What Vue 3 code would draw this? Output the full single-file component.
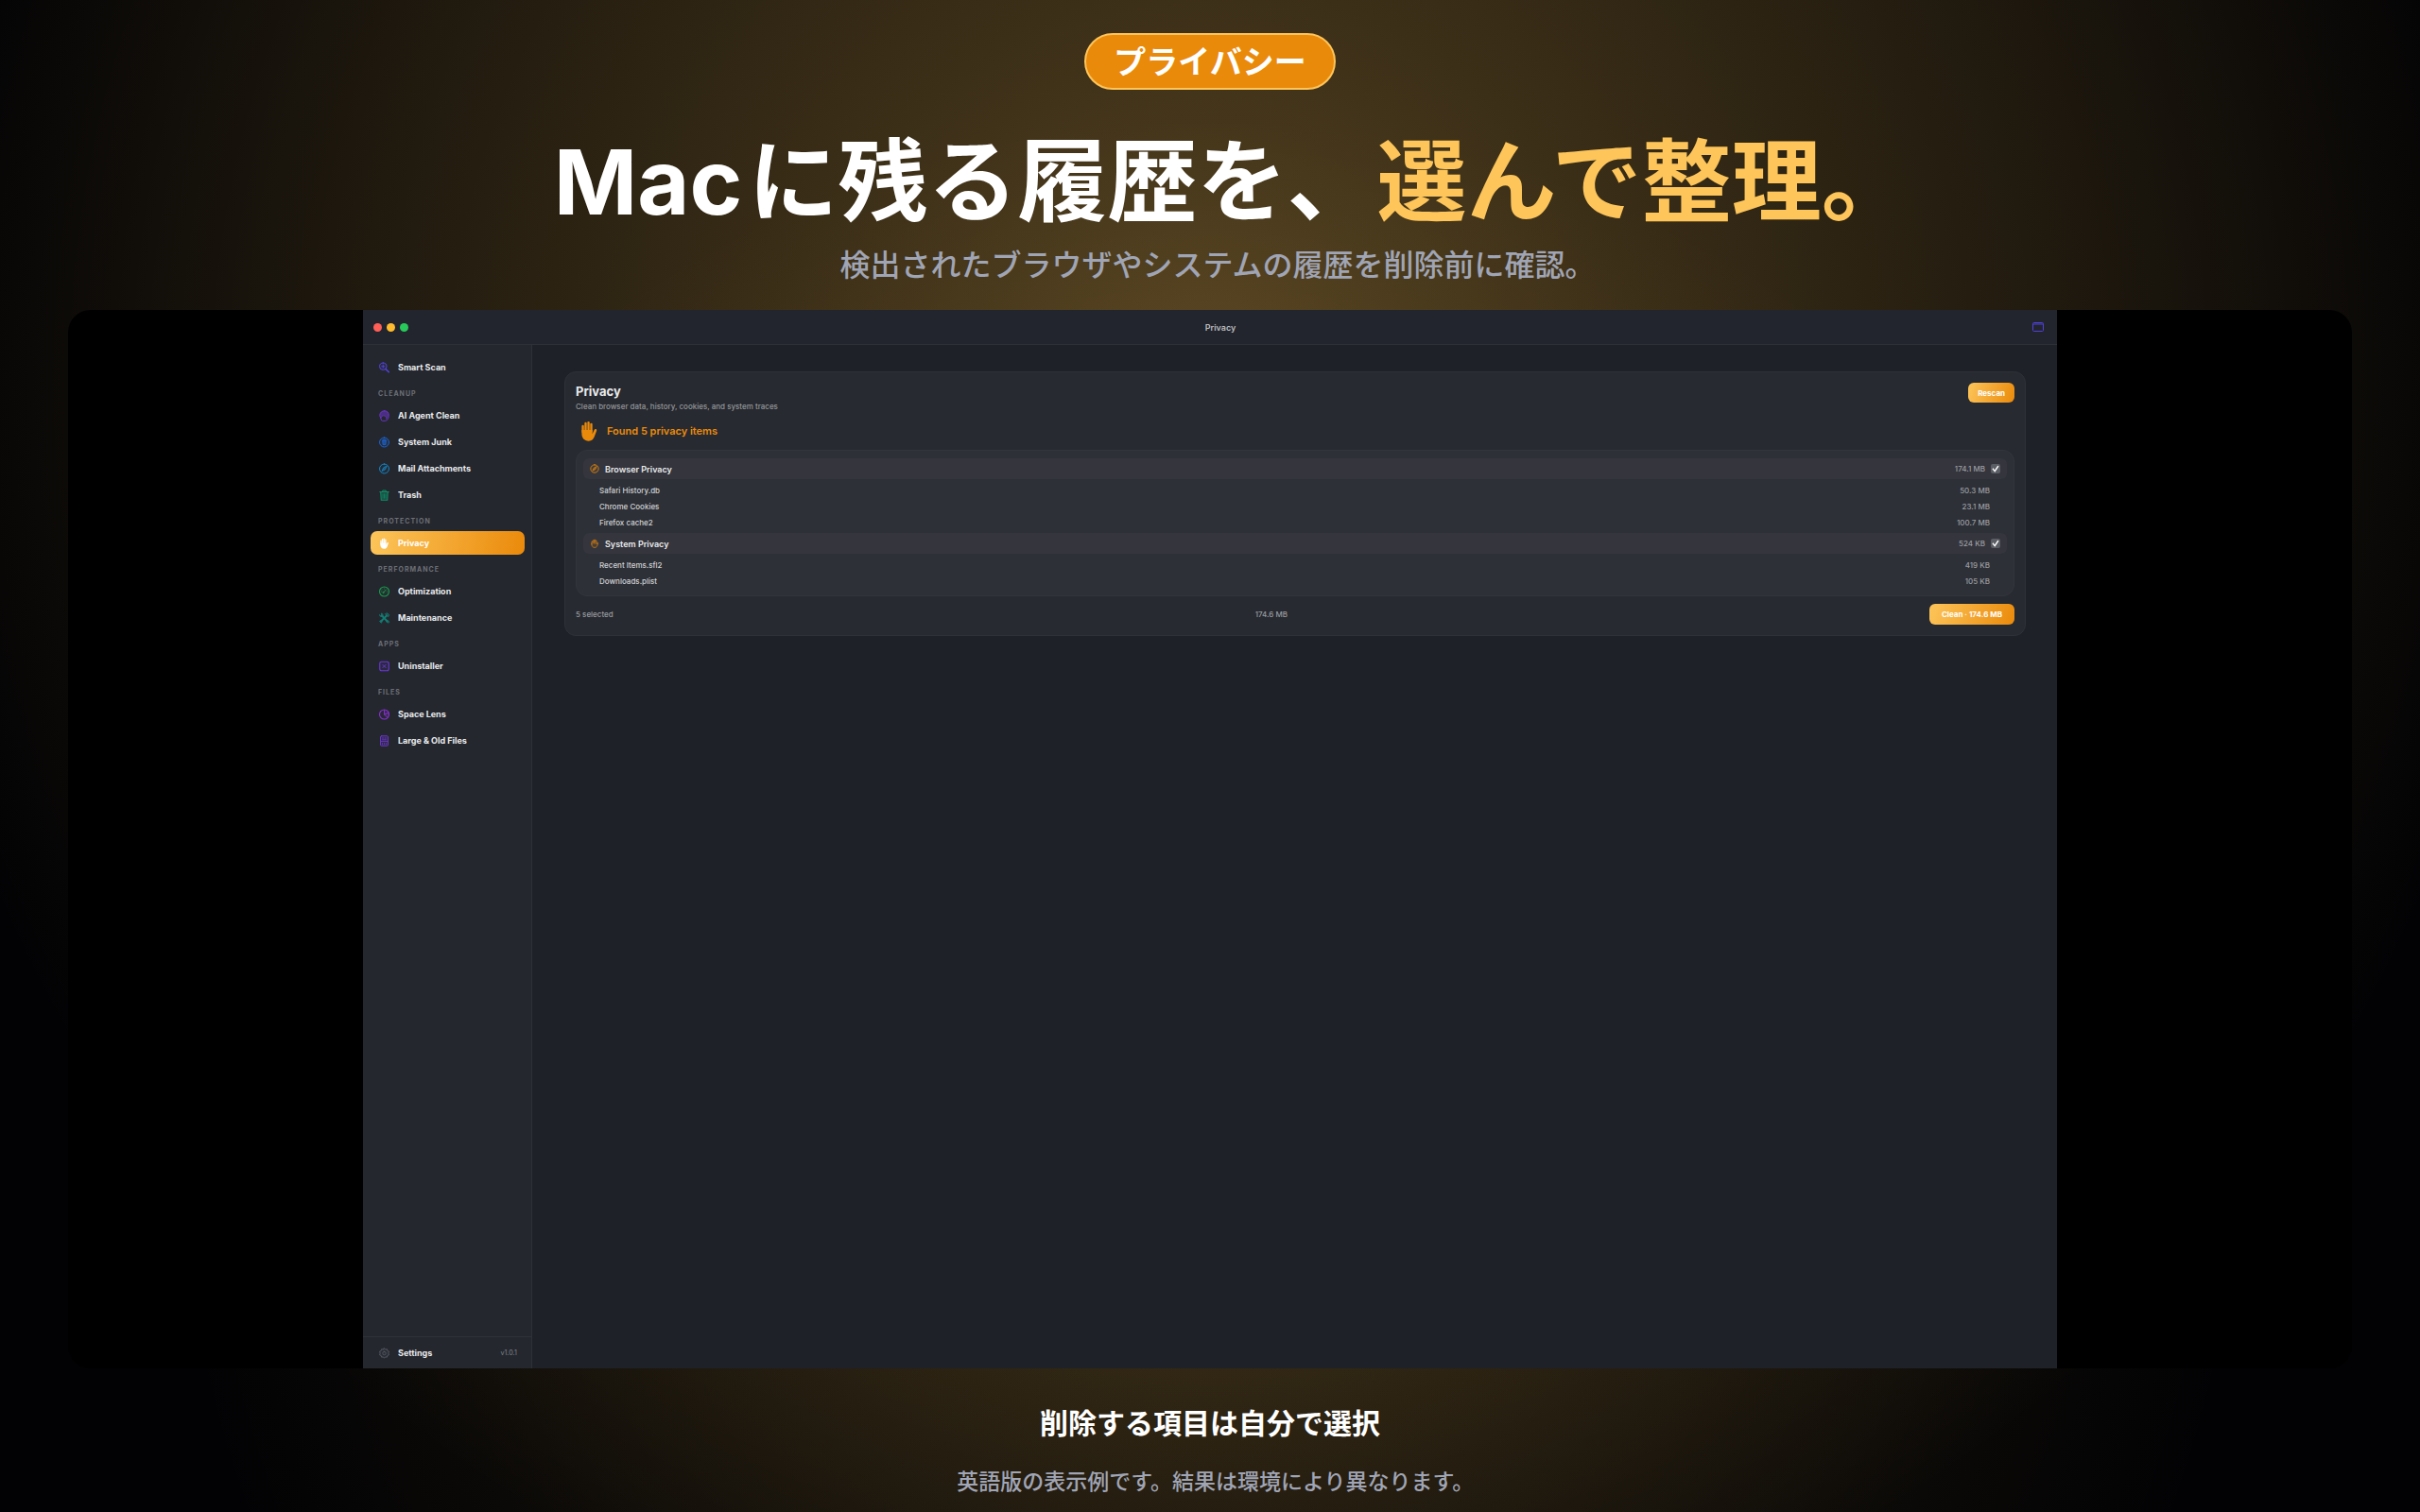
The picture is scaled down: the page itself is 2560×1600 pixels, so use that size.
<script setup>
import { reactive } from 'vue'

const hand = [
  { d: 'M5 13V6.500M8.200 12V3.300M11.500 12V2.300M14.700 12.500V4.200', w: 2.600 },
  { d: 'M3.700 11h12.300v4.500l2.100-4.600c.5-1 1.200-1.400 2-1.100.8.3 1 1.100.7 2.100l-2.600 7c-1.100 3-3.200 4.700-6.400 4.700-5.200 0-8.100-3.500-8.100-8.600z', w: 0, fill: 1 }
]

const icons = {
  scan: [
    { d: 'M9.500 2a7.500 7.500 0 1 0 0 15 7.500 7.500 0 0 0 0-15z', w: 2, fill: 0.15 },
    { d: 'M15 15l6.500 6.500', w: 3.200 },
    { d: 'M9.500 6.500v6M6.500 9.500h6', w: 1.800 }
  ],
  agent: [
    { d: 'M12.500 1.500C6.500 1.500 2.500 5.500 2.500 11c0 2 .8 3.500 2 5l.8 4c.4 1.800 1.500 2.700 3.200 2.700h5c4.500 0 8-5 8-12C21.500 5 18 1.500 12.500 1.500z', w: 2 },
    { d: 'M12.500 1.500C6.500 1.500 2.500 5.500 2.500 11l2 5c1 0 3-1 4-4.500 3 1 5.500 0 7 2.500 1 1.700 0 4 2 4 3-2 4-5 4-8C21.500 5 18 1.500 12.500 1.500z', w: 0, fill: 0.55 },
    { d: 'M5 16c1.800-1 3-2.500 3.500-4.500 3 1 5.500 0 7 2.500 1 1.700.2 4 1.500 6', w: 1.500 }
  ],
  junk: [
    { d: 'M12 2a10 10 0 1 0 0 20 10 10 0 0 0 0-20z', w: 2, fill: 0.15 },
    { d: 'M7.500 8h9M10 6.500h4M8.500 9l.5 8h6l.5-8z', w: 1.700, fill: 0.6 }
  ],
  compass: [
    { d: 'M12 2a10 10 0 1 0 0 20 10 10 0 0 0 0-20z', w: 2, fill: 0.05 },
    { d: 'M17 7l-3.200 6.800L7 17l3.200-6.800z', w: 1.600, fill: 0.5 }
  ],
  trash: [
    { d: 'M2.500 5h19M8.500 4.500V2h7v2.500', w: 2 },
    { d: 'M4.500 6l1 16.500h13L19.500 6', w: 2.200, fill: 0.35 },
    { d: 'M9 9.500v9M12 9.500v9M15 9.500v9', w: 1.500 }
  ],
  hand,
  palm: [
    { d: 'M4.500 14V8.500c0-2 3-2 3 0V5.500c0-2 3.200-2 3.200 0V4c0-2 3.200-2 3.200 0v2c0-2 3-2 3 0v7.500l1.500-2.500c1-1.500 3-.5 2.400 1.200l-2.300 6c-1 2.800-3 4.300-6.500 4.300-5 0-7.500-3-7.500-8.500z', w: 1.600, fill: 0.1 },
    { d: 'M7.500 8.500V12M10.700 5.500V12M13.900 6V12', w: 1.400 }
  ],
  gauge: [
    { d: 'M12 2a10 10 0 1 0 0 20 10 10 0 0 0 0-20z', w: 2.200, fill: 0.08 },
    { d: 'M11 13.500l4.500-5.500M10.500 12.500a1.500 1.500 0 1 0 1 2', w: 1.900 },
    { d: 'M7 8v.1M12 6v.1M6 12v.1M18 12v.1', w: 1.500 }
  ],
  tools: [
    { d: 'M6.500 6.500l12 12.500', w: 4 },
    { d: 'M2 5.500C2 8.500 4 9.500 7 9l2-2C9.500 4 8.500 2 5.500 2l1 3-1.500 1.500z', w: 1.500, fill: 0.4 },
    { d: 'M17.500 6.500L5 19', w: 4 },
    { d: 'M14.500 3l4-1.500 4 4-2 3.500zM2.500 18.500l3-1.500 2 2-1.500 3zM16.500 19l2.500-2.500 3 3c1 2-.5 3.500-2.500 2.500z', w: 1.600, fill: 0.4 }
  ],
  uninstall: [
    { d: 'M6 2.500h12a3.500 3.500 0 0 1 3.500 3.500v12a3.500 3.500 0 0 1-3.500 3.500H6A3.500 3.500 0 0 1 2.500 18V6A3.500 3.500 0 0 1 6 2.500z', w: 2.200, fill: 0.1 },
    { d: 'M9 9l6 6M15 9l-6 6', w: 2 }
  ],
  lens: [
    { d: 'M12 2a10 10 0 1 0 0 20 10 10 0 0 0 0-20z', w: 2.200, fill: 0.05 },
    { d: 'M12 3v9l6.500 6.500M12 12l8.500-3', w: 1.800 },
    { d: 'M12 3v9l6.500 6.500A9 9 0 0 0 12 3z', w: 0, fill: 0.2 }
  ],
  files: [
    { d: 'M6 1.500h12a2 2 0 0 1 2 2v17a2 2 0 0 1-2 2H6a2 2 0 0 1-2-2v-17a2 2 0 0 1 2-2z', w: 2, fill: 0.2 },
    { d: 'M8 6h2M13 6h3M8 9.500h8M5 13h14M8 17v2.500M12 17v2.500M16 17v2.500', w: 1.700 }
  ],
  gear: [
    { d: 'M12 1.500l2.300 2.700 3.500-.8.9 3.400 3.300 1.500-1.400 3.700 1.400 3.400-3.300 1.500-.9 3.500-3.500-.7L12 22.500l-2.300-2.800-3.500.7-.9-3.500L2 15.400 3.400 12 2 8.300l3.300-1.500.9-3.400 3.500.8z', w: 1.700, fill: 0.1 },
    { d: 'M12 8.500a3.500 3.500 0 1 0 0 7 3.500 3.500 0 0 0 0-7z', w: 1.500 }
  ]
}

const sections = [
  { label: '', items: [{ name: 'Smart Scan', icon: 'scan', tone: 'indigo' }] },
  {
    label: 'CLEANUP',
    items: [
      { name: 'AI Agent Clean', icon: 'agent', tone: 'purple' },
      { name: 'System Junk', icon: 'junk', tone: 'blue' },
      { name: 'Mail Attachments', icon: 'compass', tone: 'sky' },
      { name: 'Trash', icon: 'trash', tone: 'emerald' }
    ]
  },
  { label: 'PROTECTION', items: [{ name: 'Privacy', icon: 'hand', tone: 'white', active: true }] },
  {
    label: 'PERFORMANCE',
    items: [
      { name: 'Optimization', icon: 'gauge', tone: 'green' },
      { name: 'Maintenance', icon: 'tools', tone: 'teal' }
    ]
  },
  { label: 'APPS', items: [{ name: 'Uninstaller', icon: 'uninstall', tone: 'violet' }] },
  {
    label: 'FILES',
    items: [
      { name: 'Space Lens', icon: 'lens', tone: 'magenta' },
      { name: 'Large & Old Files', icon: 'files', tone: 'purple' }
    ]
  }
]

const groups = reactive([
  {
    id: 'browser', name: 'Browser Privacy', icon: 'compass', size: '174.1 MB', checked: true,
    rows: [
      { name: 'Safari History.db', size: '50.3 MB' },
      { name: 'Chrome Cookies', size: '23.1 MB' },
      { name: 'Firefox cache2', size: '100.7 MB' }
    ]
  },
  {
    id: 'system', name: 'System Privacy', icon: 'palm', size: '524 KB', checked: true,
    rows: [
      { name: 'Recent Items.sfl2', size: '419 KB' },
      { name: 'Downloads.plist', size: '105 KB' }
    ]
  }
])
</script>

<template>
  <div class="page">
    <header class="hero">
      <span class="pill">プライバシー</span>
      <h1 class="stop"><span class="latin">Mac</span>に残る履歴を、<em>選んで整理。</em></h1>
      <p class="stop">検出されたブラウザやシステムの履歴を削除前に確認。</p>
    </header>

    <div class="stage">
      <div class="app">
        <div class="titlebar">
          <div class="lights"><i class="close"></i><i class="mini"></i><i class="zoom"></i></div>
          <span>Privacy</span>
          <svg class="win-icon" viewBox="0 0 12 10"><rect x="0.500" y="0.500" width="11" height="9" rx="1" /><path d="M1 2h10" /></svg>
        </div>

        <div class="body">
          <aside class="sidebar">
            <nav>
              <template v-for="s in sections" :key="s.label">
                <h2 v-if="s.label">{{ s.label }}</h2>
                <a v-for="it in s.items" :key="it.name" href="#" :class="['item', { active: it.active }]">
                  <svg :class="['icon', it.tone]" viewBox="0 0 24 24">
                    <path v-for="(p, i) in icons[it.icon]" :key="i" :d="p.d" :stroke-width="p.w" :fill-opacity="p.fill || 0" />
                  </svg>
                  <span>{{ it.name }}</span>
                </a>
              </template>
            </nav>
            <div class="settings">
              <a href="#">
                <svg class="icon gray" viewBox="0 0 24 24">
                  <path v-for="(p, i) in icons.gear" :key="i" :d="p.d" :stroke-width="p.w" :fill-opacity="p.fill || 0" />
                </svg>
                <span>Settings</span>
              </a>
              <small>v1.0.1</small>
            </div>
          </aside>

          <main class="content">
            <section class="card">
              <div class="card-head">
                <div>
                  <h3>Privacy</h3>
                  <p>Clean browser data, history, cookies, and system traces</p>
                </div>
                <button type="button">Rescan</button>
              </div>

              <div class="found">
                <svg class="icon orange" viewBox="0 0 24 24">
                  <path v-for="(p, i) in icons.hand" :key="i" :d="p.d" :stroke-width="p.w" :fill-opacity="p.fill || 0" />
                </svg>
                <strong>Found 5 privacy items</strong>
              </div>

              <div class="list">
                <div v-for="g in groups" :key="g.id" class="group">
                  <div class="group-head">
                    <svg class="icon orange" viewBox="0 0 24 24">
                      <path v-for="(p, i) in icons[g.icon]" :key="i" :d="p.d" :stroke-width="p.w" :fill-opacity="p.fill || 0" />
                    </svg>
                    <label :for="g.id">{{ g.name }}</label>
                    <span class="size">{{ g.size }}</span>
                    <input :id="g.id" v-model="g.checked" type="checkbox" />
                  </div>
                  <ul>
                    <li v-for="r in g.rows" :key="r.name">
                      <span>{{ r.name }}</span><span class="size">{{ r.size }}</span>
                    </li>
                  </ul>
                </div>
              </div>

              <div class="card-foot">
                <span>5 selected</span>
                <span>174.6 MB</span>
                <button type="button" class="clean">Clean · 174.6 MB</button>
              </div>
            </section>
          </main>
        </div>
      </div>
    </div>

    <footer class="caption">
      <p class="lead">削除する項目は自分で選択</p>
      <p class="note"><span class="stop">英語版の表示例です。結果は環境により異なります。</span></p>
    </footer>
  </div>
</template>

<style>
body {
  background: #020204;
}
</style>

<style scoped>
* {
  box-sizing: border-box;
}
h1, h2, h3, p, ul {
  margin: 0;
  padding: 0;
}
a {
  color: inherit;
  text-decoration: none;
}
.page {
  display: flex;
  flex-direction: column;
  height: 100vh;
  overflow: hidden;
  font-family: Inter, "Noto Sans CJK JP", sans-serif;
  background:
    radial-gradient(circle at 50% 25%, rgba(253, 197, 90, 0.33), rgba(253, 197, 90, 0) 1400px),
    radial-gradient(circle at 50% 76%, rgba(253, 197, 90, 0.15), rgba(253, 197, 90, 0) 1100px),
    #020204;
}
.hero {
  display: flex;
  flex-direction: column;
  align-items: center;
  padding: 35px 0 27px;
  text-align: center;
}
.pill {
  height: 60px;
  padding: 0 29px;
  border: 2px solid #fdc55a;
  border-radius: 30px;
  background: #ea8a0b;
  color: #fff;
  font-size: 34px;
  font-weight: 700;
  line-height: 58px;
}
h1 {
  margin-top: 46px;
  color: #fff;
  font-size: 95px;
  font-weight: 700;
  line-height: 104px;
}
h1 em {
  color: #fdc55a;
  font-style: normal;
}
/* the closing full stop fills half its cell: leave the empty half out of the centring */
.stop {
  margin-right: -0.5em;
}
.latin {
  margin-right: 6px;
}
.hero p {
  margin-top: 16px;
  color: #a0a5b5;
  font-size: 32px;
  font-weight: 500;
  line-height: 40px;
}
.stage {
  display: flex;
  flex: 1;
  justify-content: center;
  min-height: 0;
  margin: 0 72px;
  border-radius: 24px;
  background: #000;
}
.app {
  display: flex;
  flex-direction: column;
  height: 100%;
  aspect-ratio: 16 / 10;
  background: #1e2128;
  color: #e9eaec;
}
.titlebar {
  display: flex;
  align-items: center;
  justify-content: space-between;
  height: 37px;
  padding: 0 14px 0 11px;
  border-bottom: 1px solid #2e3138;
  background: #22252d;
  color: #b9bbbf;
  font-size: 9px;
  font-weight: 600;
}
.lights {
  display: flex;
  gap: 5px;
}
.lights i {
  width: 9px;
  height: 9px;
  border-radius: 50%;
}
.close { background: #ff5f57; }
.mini { background: #febc2e; }
.zoom { background: #28c95b; }
.win-icon {
  width: 12px;
  height: 10px;
  fill: none;
  stroke: #4f41d8;
}
.body {
  display: flex;
  flex: 1;
  min-height: 0;
}
.sidebar {
  display: flex;
  flex-direction: column;
  justify-content: space-between;
  width: 179px;
  border-right: 1px solid #2e3138;
  background: #24272e;
}
nav {
  display: flex;
  flex-direction: column;
  gap: 3px;
  padding: 11px 7px 11px 8px;
}
h2 {
  padding: 6px 8px 0;
  color: #6c6f76;
  font-size: 7px;
  font-weight: 700;
  letter-spacing: 1px;
  line-height: 14px;
}
.item {
  display: flex;
  align-items: center;
  gap: 8px;
  height: 25px;
  padding: 0 8px;
  border-radius: 7px;
  font-size: 9px;
  font-weight: 700;
}
.item.active {
  background: linear-gradient(100deg, #fdc55a, #ea8a0b);
  color: #fff;
}
.icon {
  flex: none;
  width: 13px;
  height: 12px;
  fill: currentColor;
  stroke: currentColor;
  stroke-linecap: round;
  stroke-linejoin: round;
}
.indigo { color: #5443d8; }
.purple { color: #6a35c6; }
.blue { color: #1d62cc; }
.sky { color: #1585c6; }
.emerald { color: #0f8c66; }
.white { color: #fff; }
.green { color: #1a9d4e; }
.teal { color: #137c72; }
.violet { color: #6b37dc; }
.magenta { color: #8a30d4; }
.gray { color: #5c5f68; }
.orange { color: #ea8a0b; }
.settings {
  display: flex;
  align-items: center;
  justify-content: space-between;
  height: 34px;
  padding: 0 15px 0 16px;
  border-top: 1px solid #2e3138;
}
.settings a {
  display: flex;
  align-items: center;
  gap: 8px;
  font-size: 9px;
  font-weight: 700;
}
.settings small {
  color: #75787e;
  font-size: 7px;
  font-weight: 500;
}
.content {
  flex: 1;
  padding: 28px 33px 28px 34px;
}
.card {
  padding: 11px;
  border: 1px solid #2e3137;
  border-radius: 12px;
  background: #272a30;
}
.card-head {
  display: flex;
  align-items: flex-start;
  justify-content: space-between;
}
h3 {
  font-size: 13px;
  font-weight: 700;
  line-height: 18px;
}
.card-head p {
  color: #94969a;
  font-size: 8px;
  font-weight: 500;
  line-height: 14px;
}
button {
  height: 21px;
  padding: 0 10px;
  border: 0;
  border-radius: 6px;
  background: linear-gradient(110deg, #fdc55a, #ea8a0b);
  color: #fff;
  font-family: inherit;
  font-size: 8px;
  font-weight: 700;
}
.clean {
  height: 22px;
  padding: 0 13px;
}
.found {
  display: flex;
  align-items: center;
  gap: 8px;
  height: 32px;
  margin: 3px 0 4px;
  padding-left: 3px;
  color: #ea8a0b;
  font-size: 11px;
}
.found strong {
  font-weight: 600;
}
.found .icon {
  width: 22px;
  height: 22px;
}
.list {
  padding: 8px 7px 7px;
  border: 1px solid #32353b;
  border-radius: 12px;
  background: #2d3037;
}
.group-head {
  display: flex;
  align-items: center;
  gap: 6px;
  height: 22px;
  padding: 0 7px;
  border-radius: 6px;
  background: #35353d;
  font-size: 9px;
  font-weight: 600;
}
.group-head label {
  flex: 1;
}
.group-head .icon {
  width: 10px;
  height: 10px;
}
.size {
  color: #9b9da1;
  font-size: 8px;
  font-weight: 500;
}
.group-head input {
  position: relative;
  width: 10px;
  height: 10px;
  margin: 0;
  border-radius: 2px;
  appearance: none;
  background: #5c5e65;
}
.group-head input:checked::after {
  position: absolute;
  inset: 1px;
  background: #fff;
  clip-path: polygon(5% 52%, 19% 42%, 38% 68%, 78% 8%, 94% 18%, 41% 96%);
  content: "";
}
.group ul {
  padding: 3px 18px 3px 17px;
  list-style: none;
}
.group:last-child ul {
  padding-bottom: 0;
}
.group li {
  display: flex;
  align-items: center;
  justify-content: space-between;
  height: 17px;
  color: #d2d3d5;
  font-size: 8px;
  font-weight: 500;
}
.card-foot {
  display: flex;
  align-items: center;
  justify-content: space-between;
  margin-top: 8px;
  color: #9b9da1;
  font-size: 8px;
  font-weight: 500;
}
.caption {
  padding: 38px 0 16px;
  text-align: center;
}
.lead {
  color: #fff;
  font-size: 30px;
  font-weight: 700;
  line-height: 40px;
}
.note {
  margin-top: 26px;
  color: #a0a5b5;
  font-size: 23px;
  font-weight: 500;
  line-height: 32px;
}
</style>
